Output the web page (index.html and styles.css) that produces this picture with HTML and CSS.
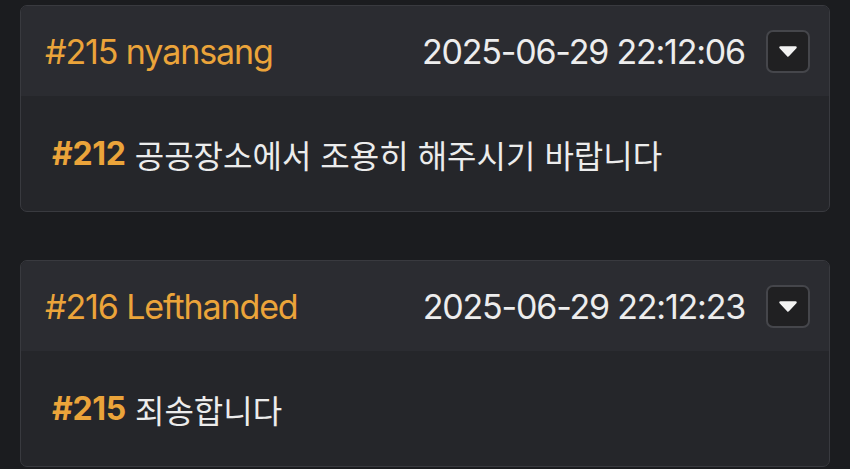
FILE: index.html
```html
<!DOCTYPE html>
<html lang="ko">
<head>
<meta charset="UTF-8" />
<meta name="viewport" content="width=device-width, initial-scale=1" />
<title>Thread</title>
<link rel="stylesheet" href="styles.css">
</head>
<body>
<main class="thread">

  <article class="post">
    <header class="post-head">
      <span class="post-author">#215 nyansang</span>
      <div class="post-meta">
        <time class="post-time">2025-06-29 22:12:06</time>
        <button class="menu-btn" aria-label="menu">
          <svg width="20" height="13" viewBox="0 0 20 13"><path d="M2.5 2.5 H17.5 L10 10.5 Z" fill="#f2f2f2" stroke="#f2f2f2" stroke-width="2.5" stroke-linejoin="round"/></svg>
        </button>
      </div>
    </header>
    <div class="post-body"><span class="ref">#212</span> 공공장소에서 조용히 해주시기 바랍니다</div>
  </article>

  <article class="post">
    <header class="post-head">
      <span class="post-author">#216 Lefthanded</span>
      <div class="post-meta">
        <time class="post-time">2025-06-29 22:12:23</time>
        <button class="menu-btn" aria-label="menu">
          <svg width="20" height="13" viewBox="0 0 20 13"><path d="M2.5 2.5 H17.5 L10 10.5 Z" fill="#f2f2f2" stroke="#f2f2f2" stroke-width="2.5" stroke-linejoin="round"/></svg>
        </button>
      </div>
    </header>
    <div class="post-body"><span class="ref">#215</span> 죄송합니다</div>
  </article>

</main>
</body>
</html>
```

FILE: styles.css
```css
body { margin: 0; background: #1b1c1f; font-family: Inter, "Noto Sans CJK KR", sans-serif; color: #ececec; }
.thread { display: flex; flex-direction: column; gap: 48px; padding: 5px 20px 0; }
.post { border: 1px solid #393a3f; border-radius: 7px; overflow: hidden; background: #25262a; }
.post-head { height: 90px; display: flex; align-items: center; justify-content: space-between; padding: 0 19px 0 24px; background: #2b2c31; }
.post-author { color: #eba43a; font-size: 34px; letter-spacing: -1.1px; }
.post-meta { display: flex; align-items: center; gap: 21px; }
.post-time { font-size: 34px; letter-spacing: -1.2px; color: #ededed; }
.menu-btn { width: 44px; height: 43px; display: flex; align-items: center; justify-content: center; padding: 0; background: #202022; border: 2px solid #45464b; border-radius: 7px; }
.post-body { height: 115px; display: flex; align-items: center; padding-left: 31px; font-size: 32px; }
.ref { color: #eba43a; font-weight: 700; margin-right: 9px; letter-spacing: -0.3px; }
```
